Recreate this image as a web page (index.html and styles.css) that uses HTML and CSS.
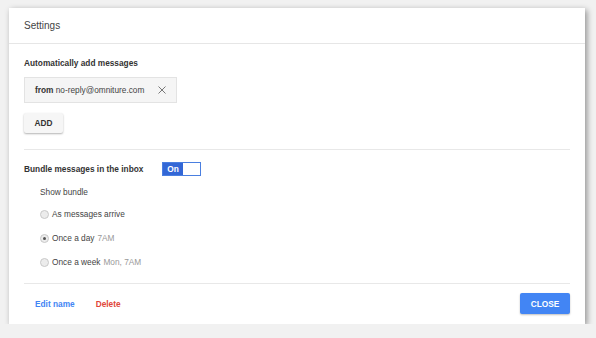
FILE: index.html
```html
<!DOCTYPE html>
<html lang="en">
<head>
  <meta charset="UTF-8" />
  <title>Settings</title>
  <link rel="stylesheet" href="styles.css">
</head>
<body>
  <div class="dialog">
    <div class="dialog-header">Settings</div>

    <div class="dialog-body">
      <div class="heading">Automatically add messages</div>

      <div class="chip">
        <span><b>from</b> no-reply@omniture.com</span>
        <svg class="chip-close" width="8" height="8" viewBox="0 0 8 8">
          <path d="M0.5 0.5 L7.5 7.5 M7.5 0.5 L0.5 7.5" stroke="#6a6a6a" stroke-width="0.9" fill="none" />
        </svg>
      </div>

      <button class="btn-add">ADD</button>

      <div class="divider"></div>

      <div class="bundle-row">
        <div class="heading bundle-label">Bundle messages in the inbox</div>
        <div class="toggle">
          <span class="toggle-on">On</span>
          <span class="toggle-off"></span>
        </div>
      </div>

      <div class="options">
        <div class="options-title">Show bundle</div>
        <label class="radio"><span class="radio-dot"></span>As messages arrive</label>
        <label class="radio"><span class="radio-dot checked"></span>Once a day <span class="muted">7AM</span></label>
        <label class="radio"><span class="radio-dot"></span>Once a week <span class="muted">Mon, 7AM</span></label>
      </div>

      <div class="divider divider-bottom"></div>

      <div class="dialog-footer">
        <a class="link link-blue">Edit name</a>
        <a class="link link-red">Delete</a>
        <button class="btn-close">CLOSE</button>
      </div>
    </div>
  </div>
</body>
</html>
```

FILE: styles.css
```css
body {
  margin: 0;
  padding: 8px 0 0 9px;
  background-color: #f1f1f1;
  font-family: "Liberation Sans", Arial, sans-serif;
  color: #333;
}
.dialog {
  width: 576px;
  background: #fff;
  box-shadow: 2px 2px 6px rgba(0,0,0,0.4);
}
.dialog-header {
  height: 35px;
  padding: 0 15px;
  display: flex;
  align-items: center;
  font-size: 10px;
  color: #444;
  border-bottom: 1px solid #e6e6e6;
}
.dialog-body {
  padding: 13px 15px 0 15px;
}
.heading {
  font-size: 8.3px;
  line-height: 12px;
  font-weight: bold;
  color: #333;
}
.chip {
  width: 153px;
  height: 26px;
  margin-top: 8px;
  box-sizing: border-box;
  padding: 0 10px;
  display: flex;
  align-items: center;
  justify-content: space-between;
  background: #f5f5f5;
  border: 1px solid #e3e3e3;
  font-size: 8.3px;
  color: #444;
}
.chip b {
  color: #333;
}
.btn-add {
  display: block;
  width: 39px;
  height: 20px;
  margin-top: 10px;
  padding: 0;
  border: none;
  border-radius: 2px;
  background: #f6f6f6;
  box-shadow: 0 1px 2px rgba(0,0,0,0.3);
  font-family: inherit;
  font-size: 8.3px;
  font-weight: bold;
  color: #333;
}
.divider {
  height: 1px;
  margin-top: 16px;
  background: #e8e8e8;
}
.bundle-row {
  display: flex;
  align-items: center;
  margin-top: 12px;
}
.bundle-label {
  width: 138px;
}
.toggle {
  display: flex;
  width: 39px;
  height: 14px;
  box-sizing: border-box;
  border: 1px solid #4a7fe0;
}
.toggle-on {
  width: 20px;
  background: #3367d6;
  color: #fff;
  font-size: 8.3px;
  font-weight: bold;
  line-height: 12px;
  text-align: center;
}
.toggle-off {
  flex: 1;
  background: #fff;
}
.options {
  padding-left: 16px;
}
.options-title {
  margin-top: 10px;
  font-size: 8.3px;
  line-height: 12px;
  color: #444;
}
.radio {
  display: flex;
  align-items: center;
  margin-top: 12px;
  font-size: 8.3px;
  line-height: 12px;
  color: #444;
}
.options-title + .radio {
  margin-top: 10px;
}
.radio-dot {
  width: 9px;
  height: 9px;
  margin-right: 3px;
  box-sizing: border-box;
  border-radius: 50%;
  border: 1px solid #c9c9c9;
  background: #ececec;
  display: flex;
  align-items: center;
  justify-content: center;
}
.radio-dot.checked::after {
  content: "";
  width: 3px;
  height: 3px;
  border-radius: 50%;
  background: #555;
}
.muted {
  color: #999;
  margin-left: 3px;
}
.divider-bottom {
  margin-top: 15px;
}
.dialog-footer {
  display: flex;
  align-items: center;
  padding: 9px 0 10px 11px;
}
.link {
  font-size: 8.3px;
  font-weight: bold;
  cursor: pointer;
}
.link-blue {
  color: #4285f4;
}
.link-red {
  color: #e0463a;
  margin-left: 21px;
}
.btn-close {
  margin-left: auto;
  width: 50px;
  height: 21px;
  padding: 0;
  border: none;
  border-radius: 2px;
  background: #4285f4;
  box-shadow: 0 1px 2px rgba(0,0,0,0.25);
  color: #fff;
  font-family: inherit;
  font-size: 8.3px;
  font-weight: bold;
}
```
